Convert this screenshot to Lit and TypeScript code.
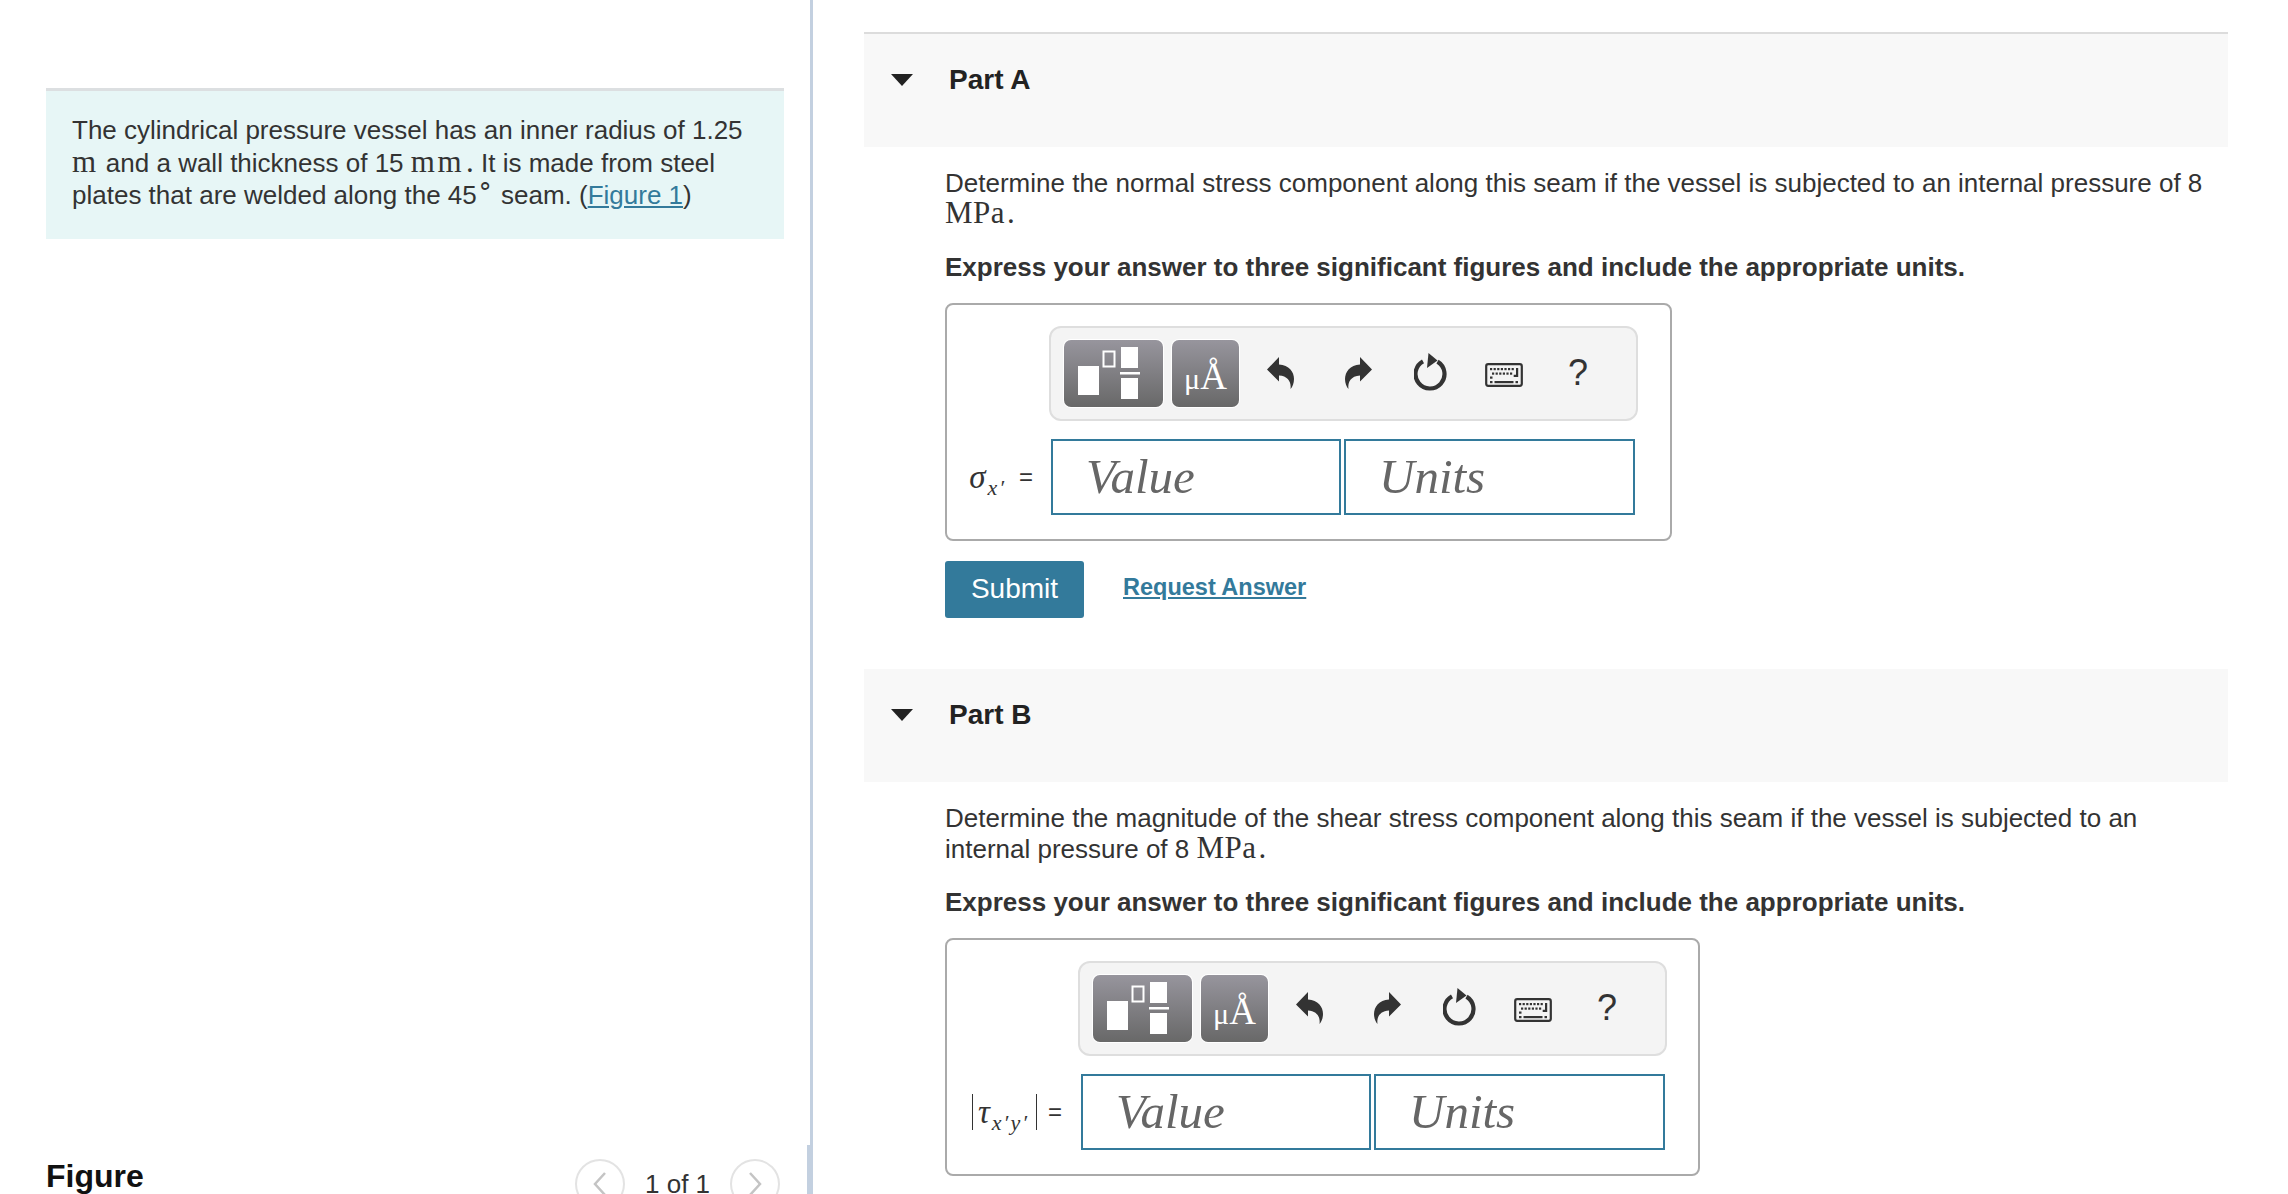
import { LitElement, html, svg, css } from "lit";
import { customElement } from "lit/decorators.js";

@customElement("app-root")
export class AppRoot extends LitElement {
  static styles = css`
    :host { display: block; width: 2288px; height: 1194px; overflow: hidden; background: #fff; color: #333;
      font-family: "Liberation Sans", Arial, sans-serif; font-size: 26px; line-height: 32px; }
    .page { display: flex; height: 1194px; overflow: hidden; position: relative; }
    .left { width: 810px; flex: none; border-right: 3px solid #c3d0e0; padding-top: 88px; }
    .info { margin: 0 26px 0 46px; border-top: 3px solid #dcdfe1; background: #e7f6f6; padding: 23px 26px 28px; }
    .m { font-family: "Liberation Serif", serif; font-size: 31px; letter-spacing: 2.500px; }
    .dot { font-family: "Liberation Serif", serif; font-size: 31px; margin-left: 2px; }
    a { color: #337a9b; }
    sup { font-size: 26px; line-height: 0; font-family: "Liberation Serif", serif; margin-right: 1px; }
    .figrow { display: flex; align-items: flex-start; margin: 912px 0 0 46px; width: 734px; height: 60px; }
    .figlabel { font-size: 32px; font-weight: 700; color: #111; line-height: 40px; margin-top: 5px; flex: 1; }
    .pager { display: flex; align-items: flex-start; margin-top: 8px; }
    .circle { width: 46px; height: 46px; border: 2px solid #e3e3e3; border-radius: 50%; display: flex; align-items: center; justify-content: center; }
    .count { margin: 9px 19px 0 20px; width: 66px; white-space: nowrap; color: #333; }
    .rule { position: absolute; left: 807px; top: 1145px; width: 3px; height: 49px; background: #c3d0e0; }
    .right { flex: 1; padding: 32px 60px 0 51px; min-width: 0; }
    .head { background: #f8f8f8; height: 113px; display: flex; align-items: flex-start; font-weight: 700; font-size: 28px; color: #222; }
    .head.first { border-top: 2px solid #dcdcdc; }
    .tri { width: 0; height: 0; border-left: 11px solid transparent; border-right: 11px solid transparent; border-top: 12px solid #222; margin: 40px 36px 0 27px; }
    .title { margin-top: 28px; line-height: 36px; }
    .body { padding: 20.500px 0 0 81px; }
    .q { line-height: 30px; margin: 0; }
    .q .m { letter-spacing: .500px; }
    .ex { font-weight: 700; margin: 22px 0 0; line-height: 32px; }
    .box { border: 2px solid #aaa; border-radius: 8px; margin-top: 20px; padding: 21px 0 24px; display: grid; grid-template-rows: 95px 76px; row-gap: 18px; box-sizing: border-box; }
    .box.a { width: 727px; grid-template-columns: 102px 589px; }
    .box.b { width: 755px; grid-template-columns: 131px 589px; }
    .toolbar { grid-column: 2; grid-row: 1; box-sizing: border-box; border: 2px solid #dedede; border-radius: 12px; background: #f4f4f4; display: flex; align-items: center; padding-left: 13px; }
    .tbtn { height: 67px; border-radius: 7px; background: linear-gradient(#97959d, #686868); display: flex; align-items: center; justify-content: center; color: #fff; box-sizing: border-box; box-shadow: 0 0 0 1px #fff; flex: none; }
    .tbtn.tpl { width: 99px; margin-right: 9px; }
    .tbtn.unit { width: 67px; font-family: "Liberation Serif", serif; font-size: 37px; line-height: 67px; margin-right: 28px; }
    .tbtn.unit span { margin-top: 8px; }
    .tbtn.unit i { font-style: normal; font-size: 30px; }
    .ic { flex: none; display: block; }
    .ic.und { width: 27px; height: 32px; margin: 0 51px 0 0; }
    .ic.red { width: 27px; height: 32px; margin: 0 42px 0 0; }
    .ic.rst { width: 34px; height: 38px; margin: -2px 37px 0 0; }
    .ic.kb { width: 38px; height: 24px; margin: 4px 40px 0 0; }
    .help { font-size: 36px; color: #333; width: 30px; text-align: center; }
    .label { grid-column: 1; grid-row: 2; display: flex; align-items: center; justify-content: flex-end; padding-right: 16px; font-size: 24px; white-space: nowrap; color: #333; }
    .sym { font-family: "Liberation Serif", serif; font-style: italic; font-size: 33px; }
    .sym sub { font-size: 22px; line-height: 0; letter-spacing: 2px; margin-left: 2px; }
    .eq { margin-left: 13px; }
    .abs { border-left: 1.500px solid #333; border-right: 1.500px solid #333; padding: 0 7px 0 5px; line-height: 36px; }
    .abs + .eq { margin-left: 11px; }
    .inputs { grid-column: 2; grid-row: 2; display: flex; gap: 3px; padding-left: 2px; }
    .box.b .inputs { padding-left: 3px; }
    input { width: 290px; height: 76px; box-sizing: border-box; border: 2px solid #337a9b; border-radius: 0; padding: 0 0 0 33px; font-family: "Liberation Serif", serif; font-style: italic; font-size: 49px; background: #fff; outline: none; min-width: 0; }
    input:last-child { width: 291px; }
    input::placeholder { color: #666; opacity: 1; }
    .actions { display: flex; align-items: center; margin-top: 20px; }
    .submit { width: 139px; height: 57px; background: #337a9b; color: #fff; border: 0; border-radius: 3px; font-family: "Liberation Sans", Arial, sans-serif; font-size: 28px; padding: 0; }
    .req { margin: 0 0 5px 39px; font-weight: 700; font-size: 23.500px; }
    .partb { margin-top: 51.500px; }
  `;

  private tplIcon() {
    return html`<svg width="99" height="67" viewBox="0 0 99 67"><rect x="14" y="26" width="21" height="29" fill="#fff"/><rect x="39.5" y="11.500" width="11" height="15" fill="none" stroke="#fff" stroke-width="2"/><rect x="57" y="7" width="17" height="21" fill="#fff"/><rect x="56" y="32" width="20" height="2.500" fill="#fff"/><rect x="57" y="38" width="17" height="21" fill="#fff"/></svg>`;
  }
  private undo() {
    return html`<svg class="ic und" viewBox="0 0 27 32"><path fill="#333" d="M0 12.500 L12 0 V7.500 C22 8 27 15 27 22 C27 26 25.500 30 23.500 32 C24.500 25 21 19 12 18.500 V24.500 Z"/></svg>`;
  }
  private redo() {
    return html`<svg class="ic red" viewBox="0 0 27 32"><path fill="#333" d="M27 12.500 L15 0 V7.500 C5 8 0 15 0 22 C0 26 1.500 30 3.500 32 C2.500 25 6 19 15 18.500 V24.500 Z"/></svg>`;
  }
  private reset() {
    return html`<svg class="ic rst" viewBox="0 0 34 38"><path fill="none" stroke="#333" stroke-width="4.200" d="M9 8.300 A14.500 14.500 0 1 0 23.500 8.600"/><path fill="#333" d="M14.500 0 L23.500 7.500 L13 15 Z"/></svg>`;
  }
  private keyboard() {
    const keys = [];
    for (let i = 0; i < 7; i++) keys.push(svg`<rect x=${5 + i * 3.6} y="5" width="2.200" height="2.200" fill="#333"/>`);
    for (let i = 0; i < 6; i++) keys.push(svg`<rect x=${7 + i * 3.6} y="9.500" width="2.200" height="2.200" fill="#333"/>`);
    return html`<svg class="ic kb" viewBox="0 0 38 24"><rect x="1.200" y="1.200" width="35.600" height="21.600" rx="2" fill="#f4f4f4" stroke="#333" stroke-width="2.200"/>${keys}<path fill="#333" d="M31 5h2.200v9h-4.500v-2.200h2.300z"/><rect x="5" y="13.500" width="2.500" height="2.200" fill="#333"/><rect x="5" y="18" width="2.500" height="2.200" fill="#333"/><rect x="9.500" y="18" width="19" height="2.200" fill="#333"/><rect x="30.500" y="18" width="2.500" height="2.200" fill="#333"/></svg>`;
  }

  private answer(kind: string, label: unknown) {
    return html`<div class="box ${kind}">
      <div class="toolbar">
        <div class="tbtn tpl">${this.tplIcon()}</div>
        <div class="tbtn unit"><span><i>μ</i>Å</span></div>
        ${this.undo()}${this.redo()}${this.reset()}${this.keyboard()}
        <div class="help">?</div>
      </div>
      <div class="label">${label}</div>
      <div class="inputs"><input placeholder="Value" /><input placeholder="Units" /></div>
    </div>`;
  }

  render() {
    return html`<div class="page">
      <div class="left">
        <div class="info">The cylindrical pressure vessel has an inner radius of 1.25 <span class="m">m</span> and a wall thickness of 15 <span class="m">mm</span><span class="dot">.</span> It is made from steel plates that are welded along the 45<sup>∘</sup> seam. (<a href="#">Figure 1</a>)</div>
        <div class="figrow">
          <div class="figlabel">Figure</div>
          <div class="pager">
            <div class="circle"><svg width="20" height="26" viewBox="0 0 20 26"><path d="M15 2 L5 13 L15 24" fill="none" stroke="#c4c4c4" stroke-width="2.500"/></svg></div>
            <div class="count">1 of 1</div>
            <div class="circle"><svg width="20" height="26" viewBox="0 0 20 26"><path d="M5 2 L15 13 L5 24" fill="none" stroke="#c4c4c4" stroke-width="2.500"/></svg></div>
          </div>
        </div>
      </div>
      <div class="rule"></div>
      <div class="right">
        <div class="head first"><div class="tri"></div><div class="title">Part A</div></div>
        <div class="body">
          <p class="q">Determine the normal stress component along this seam if the vessel is subjected to an internal pressure of 8 <span class="m">MPa</span><span class="dot">.</span></p>
          <p class="ex">Express your answer to three significant figures and include the appropriate units.</p>
          ${this.answer("a", html`<span class="sym">σ<sub>x′</sub></span><span class="eq">=</span>`)}
          <div class="actions"><button class="submit">Submit</button><a class="req" href="#">Request Answer</a></div>
        </div>
        <div class="head partb"><div class="tri"></div><div class="title">Part B</div></div>
        <div class="body">
          <p class="q">Determine the magnitude of the shear stress component along this seam if the vessel is subjected to an internal pressure of 8 <span class="m">MPa</span><span class="dot">.</span></p>
          <p class="ex">Express your answer to three significant figures and include the appropriate units.</p>
          ${this.answer("b", html`<span class="sym abs">τ<sub>x′y′</sub></span><span class="eq">=</span>`)}
        </div>
      </div>
    </div>`;
  }
}
